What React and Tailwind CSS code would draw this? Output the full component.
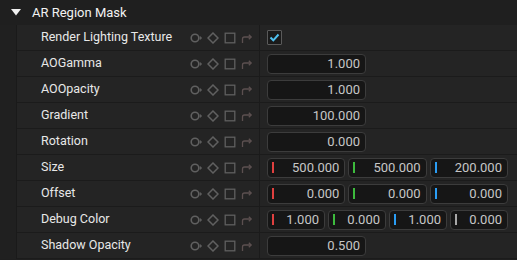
import React from 'react';

const font = { fontFamily: 'Roboto, "Noto Sans", sans-serif' };

const rows = [
  { label: 'Render Lighting Texture', type: 'check' },
  { label: 'AOGamma', type: 'num', values: ['1.000'] },
  { label: 'AOOpacity', type: 'num', values: ['1.000'] },
  { label: 'Gradient', type: 'num', values: ['100.000'] },
  { label: 'Rotation', type: 'num', values: ['0.000'] },
  { label: 'Size', type: 'vec', values: ['500.000', '500.000', '200.000'] },
  { label: 'Offset', type: 'vec', values: ['0.000', '0.000', '0.000'] },
  { label: 'Debug Color', type: 'vec', values: ['1.000', '0.000', '1.000', '0.000'] },
  { label: 'Shadow Opacity', type: 'num', values: ['0.500'] },
];

const axisColors = ['bg-[#e0403f]', 'bg-[#3dbb3d]', 'bg-[#2a9df4]', 'bg-[#a8a8a8]'];

const RowIcons = () => (
  <div className="flex items-center gap-[5px] pr-[6px] text-[#606060]">
    <svg width="12" height="12" viewBox="0 0 12 12" fill="none" stroke="currentColor" strokeWidth="1.6">
      <circle cx="5" cy="6" r="3.8" />
      <path d="M10 4.5 L11.8 6 L10 7.5 Z" fill="currentColor" strokeWidth="0.6" />
    </svg>
    <svg width="12" height="12" viewBox="0 0 12 12" fill="none" stroke="currentColor" strokeWidth="1.5">
      <path d="M6 1 L11 6 L6 11 L1 6 Z" />
    </svg>
    <svg width="12" height="12" viewBox="0 0 12 12" fill="none" stroke="currentColor" strokeWidth="1.3">
      <rect x="1.2" y="1.2" width="9.6" height="9.6" />
    </svg>
    <svg width="12" height="12" viewBox="0 0 12 12" fill="none" stroke="#5c5050" strokeWidth="1.3">
      <path d="M1.5 11 V7 Q1.5 5 3.5 5 H10" />
      <path d="M7.8 2.8 L10.2 5 L7.8 7.2" />
    </svg>
  </div>
);

const NumField = ({ value, axis, className }) => (
  <div className={`flex items-center h-[20px] rounded-[4px] border border-[#3c3c3c] bg-[#161616] pr-[5px] ${className}`}>
    {axis !== undefined && <span className={`ml-[4px] w-[2px] h-[11px] ${axisColors[axis]}`} />}
    <span className="flex-1 text-right text-[13px] text-[#c6c6c6] leading-none">{value}</span>
  </div>
);

const Value = ({ row }) => {
  if (row.type === 'check') {
    return (
      <div className="w-[15px] h-[15px] border border-[#5a5a5a] bg-[#1a1a1a] flex items-center justify-center rounded-[1px]">
        <svg width="11" height="11" viewBox="0 0 11 11" fill="none" stroke="#4fc1f0" strokeWidth="2">
          <path d="M1.5 5.5 L4.3 8.3 L9.5 2.5" />
        </svg>
      </div>
    );
  }
  if (row.type === 'num') {
    return <NumField value={row.values[0]} className="w-[99px]" />;
  }
  return (
    <div className="flex gap-[3px] w-[241px]">
      {row.values.map((v, i) => (
        <NumField key={i} value={v} axis={i} className="flex-1" />
      ))}
    </div>
  );
};

export default function App() {
  return (
    <div className="w-[517px] h-[260px] bg-[#1f1f1f] overflow-hidden select-none" style={font}>
      {/* header */}
      <div className="h-[25px] flex items-center bg-[#1f1f1f]">
        <svg className="ml-[11px]" width="10" height="7" viewBox="0 0 10 7">
          <path d="M0 0 H10 L5 6.5 Z" fill="#f0f0f0" />
        </svg>
        <span className="ml-[11px] text-[13px] text-[#f2f2f2]">AR Region Mask</span>
      </div>

      <div className="flex">
        <div className="w-[17px] bg-[#202020] border-r border-[#1a1a1a]" />
        <div className="flex-1">
          {rows.map((row) => (
            <div key={row.label} className="h-[26px] flex bg-[#242424] border-b border-[#1b1b1b]">
              <div className="w-[243px] flex items-center justify-between border-r border-[#1b1b1b]">
                <span className="pl-[24px] text-[12.5px] text-[#e8e8e8]">{row.label}</span>
                <RowIcons />
              </div>
              <div className="flex-1 flex items-center pl-[7px]">
                <Value row={row} />
              </div>
            </div>
          ))}
        </div>
      </div>
    </div>
  );
}
